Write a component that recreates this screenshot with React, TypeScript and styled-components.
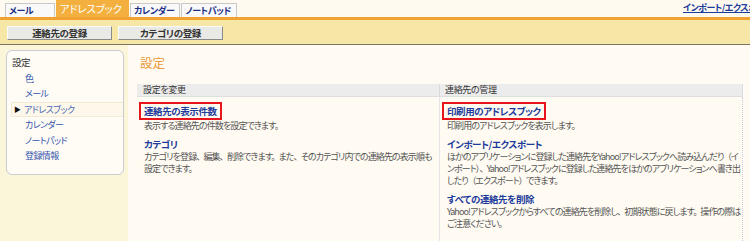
import React from "react";
import styled, { createGlobalStyle } from "styled-components";

const GlobalStyle = createGlobalStyle`
  body {
    margin: 0;
    background: #fffbf2;
    font-family: "Noto Sans CJK JP", "Noto Sans", sans-serif;
    font-feature-settings: "palt";
    color: #444;
  }
`;

const Page = styled.div`
  width: 750px;
  height: 241px;
  overflow: hidden;
  display: flex;
  flex-direction: column;
`;

const TopNav = styled.div`
  display: flex;
  align-items: flex-end;
  flex-shrink: 0;
  height: 17px;
  padding-left: 5px;
  background: #fffaf0;
`;

const Tab = styled.div<{ $active?: boolean }>`
  box-sizing: border-box;
  min-width: ${(p) => (p.$active ? 73 : 50)}px;
  height: ${(p) => (p.$active ? 17 : 14)}px;
  padding: 0 5px 0 3px;
  margin-right: 1px;
  background: ${(p) => (p.$active ? "#f4b03e" : "#f9f9f9")};
  border: 1px solid ${(p) => (p.$active ? "#f4b03e" : "#c9c9c9")};
  border-bottom: none;
  color: ${(p) => (p.$active ? "#fff" : "#1b2f86")};
  font-size: ${(p) => (p.$active ? 10.5 : 9)}px;
  font-weight: ${(p) => (p.$active ? 400 : 700)};
  letter-spacing: ${(p) => (p.$active ? -0.3 : -0.4)}px;
  line-height: ${(p) => (p.$active ? 16 : 13)}px;
  white-space: nowrap;
`;

const RightLinkClip = styled.div`
  margin-left: auto;
  width: 67px;
  height: 17px;
  overflow: hidden;
  white-space: nowrap;
  align-self: flex-start;
`;

const RightLink = styled.a`
  display: block;
  padding-top: 2px;
  color: #1b3a9a;
  font-size: 9px;
  font-weight: 700;
  line-height: 12px;
  letter-spacing: -0.5px;
  text-decoration: underline;
`;

const OrangeBar = styled.div`
  flex-shrink: 0;
  height: 3px;
  background: #f2a233;
`;

const Toolbar = styled.div`
  display: flex;
  flex-shrink: 0;
  gap: 6px;
  height: 25px;
  padding: 6px 0 0 7px;
  box-sizing: border-box;
  background: #f6e7a6;
  border-bottom: 1px solid #7c7463;
`;

const ToolButton = styled.button`
  width: 105px;
  height: 14px;
  padding: 0;
  background: #e9e9e6;
  border: 1px solid;
  border-color: #fafafa #8a8a8a #8a8a8a #fafafa;
  color: #333;
  font-family: inherit;
  font-feature-settings: "palt";
  font-size: 9.5px;
  font-weight: 700;
  letter-spacing: -0.4px;
  line-height: 12px;
`;

const Body = styled.div`
  display: flex;
  flex: 1;
  min-height: 0;
`;

const SideColumn = styled.div`
  width: 128px;
  flex-shrink: 0;
  box-sizing: border-box;
  padding: 5px 4px 0 6px;
  background: #fbf5d9;
`;

const SideBox = styled.div`
  border: 1px solid #cacbd3;
  border-radius: 6px;
  background: #fffcf5;
  padding: 4px 0 10px 5px;
`;

const SideTitle = styled.div`
  font-size: 9.5px;
  letter-spacing: -0.5px;
  line-height: 15.5px;
  color: #333;
`;

const SideItem = styled.div<{ $current?: boolean }>`
  position: relative;
  font-size: 9px;
  letter-spacing: -0.6px;
  line-height: ${(p) => (p.$current ? 13.5 : 15.5)}px;
  padding-left: ${(p) => (p.$current ? 12 : 13)}px;
  color: ${(p) => (p.$current ? "#4d6ab5" : "#3556ad")};
  background: ${(p) => (p.$current ? "#fdf8ea" : "transparent")};
  border: ${(p) => (p.$current ? "1px solid #f1ead6" : "none")};
  border-right: none;
  margin-left: ${(p) => (p.$current ? -1 : 0)}px;
`;

const Arrow = styled.span`
  position: absolute;
  left: 2px;
  top: 0;
  font-size: 7px;
  letter-spacing: 0;
  color: #111;
`;

const Main = styled.div`
  flex: 1;
  padding: 11px 0 0 9px;
  display: flex;
  flex-direction: column;
`;

const Heading = styled.h1`
  margin: 0 0 14px 3px;
  font-size: 12.5px;
  font-weight: 400;
  line-height: 14px;
  color: #e89a3c;
`;

const Table = styled.div`
  width: 606px;
  flex: 1;
  display: grid;
  grid-template-columns: 303px 303px;
  grid-template-rows: 13px 1fr;
`;

const HeadCell = styled.div<{ $last?: boolean }>`
  background: #ececec;
  border-bottom: 1px solid #dedede;
  border-right: 1px solid ${(p) => (p.$last ? "#dcdce6" : "#dadada")};
  font-size: 9px;
  letter-spacing: -0.35px;
  line-height: 12px;
  padding-left: ${(p) => (p.$last ? 5 : 6)}px;
  color: #333;
`;

const Cell = styled.div<{ $last?: boolean }>`
  padding: 5px 0 0 2px;
  border-right: 1px ${(p) => (p.$last ? "dotted #c9cbe0" : "solid #e6e6e6")};
`;

const Item = styled.div`
  & + & {
    margin-top: 5.5px;
  }
`;

const ItemTitle = styled.a<{ $boxed?: boolean }>`
  display: block;
  width: fit-content;
  margin: 0 0 ${(p) => (p.$boxed ? 0 : 1.5)}px ${(p) => (p.$boxed ? 0 : 5)}px;
  padding: ${(p) => (p.$boxed ? "1px 3px 1px 3px" : "0")};
  border: ${(p) => (p.$boxed ? "2px solid #e8141c" : "none")};
  color: #1d3b9b;
  font-size: 9.5px;
  font-weight: 700;
  letter-spacing: -0.4px;
  line-height: 12px;
  text-decoration: none;
`;

const ItemDesc = styled.p`
  margin: 0 1px 0 5px;
  font-size: 9px;
  letter-spacing: -0.9px;
  line-height: 12px;
  color: #555;
`;

// give the halved punctuation its full width back, as the original font draws it
const fullPunct = (text: string) =>
  text
    .replace(/([、。])/g, "$1\u2002")
    .replace(/）(?![、。])/g, "）\u2002")
    .replace(/（/g, "\u2002（");

type Entry = { title: string; desc: string; boxed?: boolean };

const leftItems: Entry[] = [
  {
    title: "連絡先の表示件数",
    desc: "表示する連絡先の件数を設定できます。",
    boxed: true,
  },
  {
    title: "カテゴリ",
    desc: "カテゴリを登録、編集、削除できます。また、そのカテゴリ内での連絡先の表示順も設定できます。",
  },
];

const rightItems: Entry[] = [
  {
    title: "印刷用のアドレスブック",
    desc: "印刷用のアドレスブックを表示します。",
    boxed: true,
  },
  {
    title: "インポート/エクスポート",
    desc: "ほかのアプリケーションに登録した連絡先をYahoo!アドレスブックへ読み込んだり（インポート）、Yahoo!アドレスブックに登録した連絡先をほかのアプリケーションへ書き出したり（エクスポート）できます。",
  },
  {
    title: "すべての連絡先を削除",
    desc: "Yahoo!アドレスブックからすべての連絡先を削除し、初期状態に戻します。操作の際はご注意ください。",
  },
];

const sideItems = ["色", "メール", "アドレスブック", "カレンダー", "ノートパッド", "登録情報"];

const ItemList = ({ items }: { items: Entry[] }) => (
  <>
    {items.map((it) => (
      <Item key={it.title}>
        <ItemTitle href="#" $boxed={it.boxed}>
          {it.title}
        </ItemTitle>
        <ItemDesc>{fullPunct(it.desc)}</ItemDesc>
      </Item>
    ))}
  </>
);

export default function App() {
  return (
    <Page>
      <GlobalStyle />
      <TopNav>
        <Tab>メール</Tab>
        <Tab $active>アドレスブック</Tab>
        <Tab>カレンダー</Tab>
        <Tab>ノートパッド</Tab>
        <RightLinkClip>
          <RightLink href="#">インポート/エクスポート</RightLink>
        </RightLinkClip>
      </TopNav>
      <OrangeBar />
      <Toolbar>
        <ToolButton>連絡先の登録</ToolButton>
        <ToolButton>カテゴリの登録</ToolButton>
      </Toolbar>
      <Body>
        <SideColumn>
          <SideBox>
            <SideTitle>設定</SideTitle>
            {sideItems.map((s) => (
              <SideItem key={s} $current={s === "アドレスブック"}>
                {s === "アドレスブック" && <Arrow>▶</Arrow>}
                {s}
              </SideItem>
            ))}
          </SideBox>
        </SideColumn>
        <Main>
          <Heading>設定</Heading>
          <Table>
            <HeadCell>設定を変更</HeadCell>
            <HeadCell $last>連絡先の管理</HeadCell>
            <Cell>
              <ItemList items={leftItems} />
            </Cell>
            <Cell $last>
              <ItemList items={rightItems} />
            </Cell>
          </Table>
        </Main>
      </Body>
    </Page>
  );
}
